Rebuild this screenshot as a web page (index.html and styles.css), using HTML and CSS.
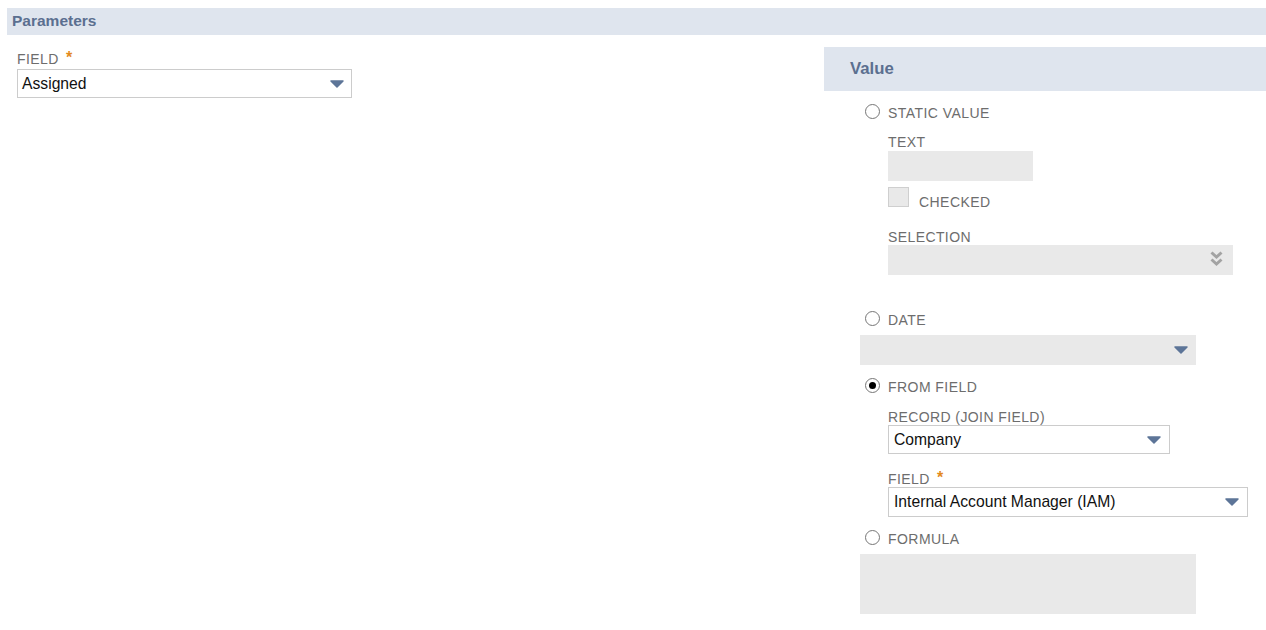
FILE: index.html
```html
<!DOCTYPE html>
<html>
<head>
<meta charset="utf-8">
<link rel="stylesheet" href="styles.css">
</head>
<body>
<div class="page">
  <div class="section-head">Parameters</div>
  <div class="content">
    <div class="left">
      <div class="lbl">FIELD <span class="req">*</span></div>
      <div class="select w-assigned">
        <span class="select-text">Assigned</span>
        <svg class="arrow" width="14" height="8" viewBox="0 0 14 8"><path d="M1 1 H13 L7 7 Z" fill="#5d7598" stroke="#5d7598" stroke-width="1.5" stroke-linejoin="round"/></svg>
      </div>
    </div>
    <div class="value-panel">
      <div class="value-head">Value</div>
      <div class="value-body">
        <div class="opt opt-static"><span class="radio"></span><span class="opt-text">STATIC VALUE</span></div>
        <div class="sub">
          <div class="lbl lbl-text">TEXT</div>
          <div class="disabled w-text"></div>
          <div class="check-row"><span class="checkbox"></span><span class="check-text">CHECKED</span></div>
          <div class="lbl lbl-selection">SELECTION</div>
          <div class="disabled w-selection">
            <svg class="chev" width="13" height="16" viewBox="0 0 13 16"><path d="M1.5 1.5 L6.5 6 L11.5 1.5 M1.5 8.5 L6.5 13 L11.5 8.5" fill="none" stroke="#a3a3a3" stroke-width="3"/></svg>
          </div>
        </div>
        <div class="opt opt-date"><span class="radio"></span><span class="opt-text">DATE</span></div>
        <div class="disabled w-date">
          <svg class="arrow" width="14" height="8" viewBox="0 0 14 8"><path d="M1 1 H13 L7 7 Z" fill="#5d7598" stroke="#5d7598" stroke-width="1.5" stroke-linejoin="round"/></svg>
        </div>
        <div class="opt opt-from"><span class="radio checked"></span><span class="opt-text">FROM FIELD</span></div>
        <div class="sub">
          <div class="lbl lbl-record">RECORD (JOIN FIELD)</div>
          <div class="select w-company">
            <span class="select-text">Company</span>
            <svg class="arrow" width="14" height="8" viewBox="0 0 14 8"><path d="M1 1 H13 L7 7 Z" fill="#5d7598" stroke="#5d7598" stroke-width="1.5" stroke-linejoin="round"/></svg>
          </div>
          <div class="lbl lbl-field2">FIELD <span class="req">*</span></div>
          <div class="select w-iam">
            <span class="select-text">Internal Account Manager (IAM)</span>
            <svg class="arrow" width="14" height="8" viewBox="0 0 14 8"><path d="M1 1 H13 L7 7 Z" fill="#5d7598" stroke="#5d7598" stroke-width="1.5" stroke-linejoin="round"/></svg>
          </div>
        </div>
        <div class="opt opt-formula"><span class="radio"></span><span class="opt-text">FORMULA</span></div>
        <div class="disabled w-formula"></div>
      </div>
    </div>
  </div>
</div>
</body>
</html>
```

FILE: styles.css
```css
* { box-sizing: border-box; }
body {
  margin: 0;
  background: #ffffff;
  font-family: "Liberation Sans", Arial, sans-serif;
}
.page {
  padding: 8px 0 0 7px;
}
.section-head {
  height: 27px;
  background: #dfe5ee;
  color: #5b6f90;
  font-weight: bold;
  font-size: 15.5px;
  line-height: 25px;
  padding-left: 5px;
}
.content {
  display: flex;
  justify-content: space-between;
  align-items: flex-start;
  margin-top: 12px;
}
.left {
  padding: 3px 0 0 10px;
}
.lbl {
  font-size: 14px;
  line-height: 16px;
  color: #6d6d6d;
  letter-spacing: 0.4px;
}
.req {
  color: #e38a1e;
  font-size: 16px;
  font-weight: bold;
  margin-left: 3px;
  vertical-align: 1px;
  letter-spacing: 0;
}
.select {
  display: flex;
  align-items: center;
  justify-content: space-between;
  height: 29px;
  border: 1px solid #cccccc;
  background: #ffffff;
  padding: 0 7px 0 4px;
  margin-top: 2px;
}
.select-text {
  font-size: 15.7px;
  color: #111111;
}
.arrow { display: block; }
.w-assigned { width: 335px; }
.value-panel {
  width: 442px;
}
.value-head {
  height: 44px;
  background: #dfe5ee;
  color: #5b6f90;
  font-weight: bold;
  font-size: 16.75px;
  line-height: 44px;
  padding-left: 26px;
}
.value-body {
  padding-left: 36px;
}
.opt {
  display: flex;
  align-items: flex-start;
  padding-left: 5px;
}
.radio {
  width: 15px;
  height: 15px;
  border: 1px solid #767676;
  border-radius: 50%;
  margin-top: -1px;
  margin-right: 8px;
  display: flex;
  align-items: center;
  justify-content: center;
  background: #fff;
}
.radio.checked::after {
  content: "";
  width: 7px;
  height: 7px;
  border-radius: 50%;
  background: #000;
}
.opt-text {
  font-size: 14px;
  line-height: 16px;
  color: #6d6d6d;
  letter-spacing: 0.45px;
}
.opt-static { margin-top: 14px; }
.opt-date { margin-top: 37px; }
.opt-from { margin-top: 14px; }
.opt-formula { margin-top: 14px; }
.sub {
  padding-left: 28px;
}
.lbl-text { margin-top: 13px; }
.disabled {
  background: #e9e9e9;
  height: 30px;
  display: flex;
  align-items: center;
  justify-content: flex-end;
  padding-right: 8px;
}
.w-text { width: 145px; margin-top: 1px; }
.check-row {
  display: flex;
  align-items: flex-start;
  margin-top: 6px;
}
.checkbox {
  width: 21px;
  height: 20px;
  background: #e9e9e9;
  border: 1px solid #cfcfcf;
  margin-right: 10px;
}
.check-text {
  font-size: 14px;
  line-height: 16px;
  color: #6d6d6d;
  padding-top: 7px;
  letter-spacing: 0.45px;
}
.lbl-selection { margin-top: 19px; }
.w-selection { width: 345px; padding-right: 10px; }
.chev { display: block; margin-top: -3px; }
.w-date { width: 336px; margin-top: 7px; }
.lbl-record { margin-top: 14px; }
.w-company { width: 282px; margin-top: 0; padding-left: 5px; padding-right: 8px; }
.lbl-field2 { margin-top: 16px; }
.w-iam { width: 360px; height: 30px; margin-top: 0; padding-left: 5px; padding-right: 8px; }
.w-formula { width: 336px; height: 60px; margin-top: 7px; }
```
